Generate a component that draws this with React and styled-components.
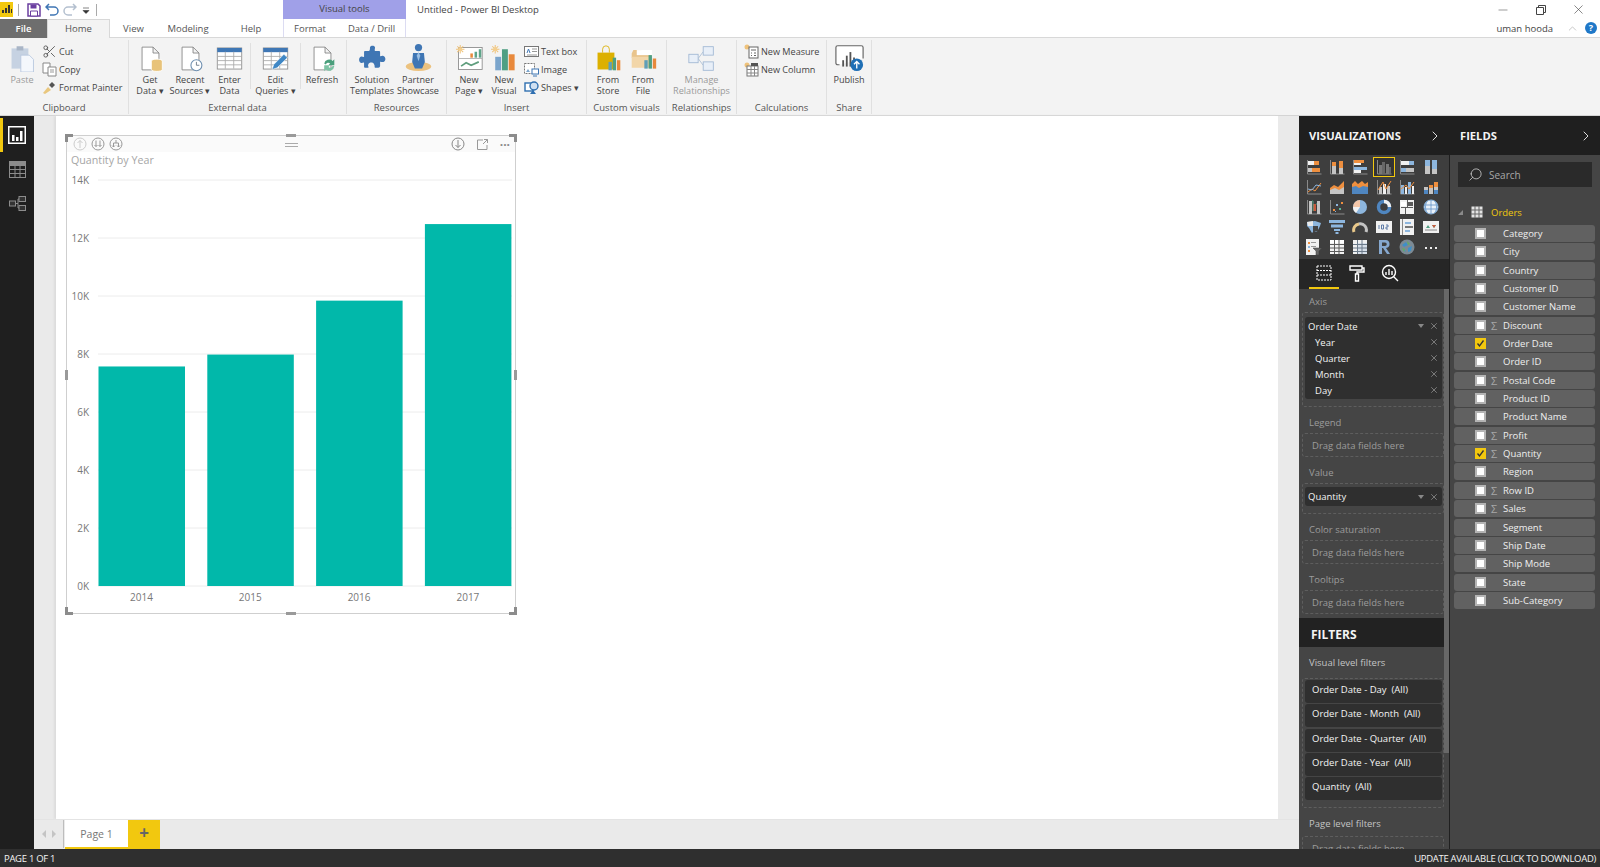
import styled, { createGlobalStyle } from "styled-components";
import { ChevronRight, ChevronUp, Scissors, X, Minus, Search } from "lucide-react";

const GlobalStyle = createGlobalStyle`
  html, body { margin: 0; padding: 0; background: #fff; }
  body { font-family: "Open Sans", "Liberation Sans", sans-serif; font-size: 9.5px; color: #444; }
  * { box-sizing: border-box; }
`;

const Svg32 = ({ children, size = 27 }) => (
  <svg width={size} height={size} viewBox="0 0 32 32">{children}</svg>
);

const Doc = () => (
  <path d="M6 2.5h13l7 7v20H6z M19 2.5v7h7" fill="#fff" stroke="#808080" />
);

const Sun = ({ x = 0, y = 0 }) => (
  <g transform={`translate(${x} ${y})`} stroke="#efc27a" strokeWidth="1.2">
    <path d="M5 0v10M0 5h10M1.5 1.5l7 7M8.5 1.5l-7 7" />
    <circle cx="5" cy="5" r="2.4" fill="#f4cf8e" stroke="none" />
  </g>
);

const large = {
  paste: (
    <Svg32>
      <rect x="3" y="4" width="20" height="24" fill="#c6d2e2" />
      <rect x="9" y="1.5" width="8" height="5" fill="#a9b5c6" />
      <path d="M14 12h10l5 5v15H14z" fill="#f4f7fc" stroke="#b6c6de" />
    </Svg32>
  ),
  getData: (
    <Svg32>
      <Doc />
      <path d="M17 19c0-3 13-3 13 0v10c0 3-13 3-13 0z" fill="#e8c37a" stroke="#fff" />
    </Svg32>
  ),
  recent: (
    <Svg32>
      <Doc />
      <circle cx="23" cy="24" r="6.5" fill="#fff" stroke="#6e8fb0" strokeWidth="1.3" />
      <path d="M23 20v4h3.5" fill="none" stroke="#5f6f80" />
    </Svg32>
  ),
  table: (
    <Svg32>
      <rect x="1.5" y="3.5" width="29" height="25" fill="#fff" stroke="#8a8a8a" />
      <rect x="1.5" y="3.5" width="29" height="5" fill="#3f77b5" />
      <path d="M1.5 13.5h29M1.5 18.5h29M1.5 23.5h29M11 8v20M21 8v20" stroke="#a8a8a8" fill="none" />
    </Svg32>
  ),
  edit: (
    <Svg32>
      <rect x="1.5" y="3.5" width="29" height="25" fill="#fff" stroke="#8a8a8a" />
      <rect x="1.5" y="3.5" width="29" height="5" fill="#3f77b5" />
      <path d="M1.5 13.5h29M1.5 18.5h29M1.5 23.5h29M11 8v20M21 8v20" stroke="#a8a8a8" fill="none" />
      <path d="M12 29l2-6L26 11l4 4-12 12z" fill="#3f87c5" stroke="#fff" strokeWidth=".6" />
    </Svg32>
  ),
  refresh: (
    <Svg32>
      <Doc />
      <path d="M18 22a6 6 0 0 1 10-3l2-2v7h-7l2-2a3 3 0 0 0-5 1z" fill="#4a9f7c" />
      <path d="M30 25a6 6 0 0 1-10 4l-2 2v-7h7l-2 2a3 3 0 0 0 5-1z" fill="#7cc3a4" />
    </Svg32>
  ),
  puzzle: (
    <Svg32>
      <path d="M13 3c0-3 6-3 6 0 0 2-1 3 0 4h5c1 0 1 1 1 2v4c1 1 2-1 4 0 3 1 3 6 0 7-2 1-3-1-4 0v5c0 1-1 2-2 2h-4c-1-1 0-2-1-4-1-3-6-3-7 0-1 2 1 3 0 4H7c-1 0-1-1-1-2v-4c-1-1-2 1-4 0-2.500-1-2.500-6 0-7 2-1 3 1 4 0V9c0-1 0-2 1-2h5c1-1 1-2 1-4z" fill="#3f76b4" />
    </Svg32>
  ),
  partner: (
    <Svg32 size={29}>
      <ellipse cx="16" cy="26" rx="14" ry="5" fill="#ecc27f" />
      <circle cx="16" cy="5" r="4" fill="#3f76b4" />
      <path d="M10 11h12l1 10-3 7h-8l-3-7z" fill="#3f76b4" />
      <path d="M16 10l2 4-2 6-2-6z" fill="#9cc0e4" />
    </Svg32>
  ),
  newPage: (
    <Svg32>
      <rect x="3" y="3" width="28" height="26" fill="#fff" stroke="#888" />
      <path d="M3 16h28" stroke="#aaa" />
      <rect x="17" y="10" width="3" height="5" fill="#e8893c" />
      <rect x="22" y="8" width="3" height="7" fill="#5fa48a" />
      <rect x="27" y="5" width="3" height="10" fill="#5fa48a" />
      <path d="M6 25l6-4 6 3 9-4" fill="none" stroke="#5f9e7d" strokeWidth="2" />
      <Sun x="0" y="0" />
    </Svg32>
  ),
  newVisual: (
    <Svg32>
      <rect x="5" y="14" width="7" height="16" fill="#7ba5cc" />
      <rect x="13" y="5" width="7" height="25" fill="#4f9f83" />
      <rect x="21" y="11" width="7" height="19" fill="#e8893c" />
      <Sun x="0" y="0" />
    </Svg32>
  ),
  store: (
    <Svg32>
      <path d="M3 9h20v20H3z" fill="#dcb000" />
      <path d="M9 9V5a4 4 0 0 1 8 0v4" fill="none" stroke="#dcb000" />
      <rect x="16" y="20" width="4" height="10" fill="#5f9fb8" />
      <rect x="21" y="15" width="4" height="15" fill="#4f9f83" />
      <rect x="26" y="18" width="4" height="12" fill="#e8893c" />
    </Svg32>
  ),
  file: (
    <Svg32>
      <path d="M2 10l2-4h9l2 3h10v6H2z" fill="#e9c48c" />
      <path d="M2 27V14h24v13z" fill="#f2d6a9" />
      <path d="M8 6h18v6H8z" fill="#fff" />
      <rect x="17" y="18" width="4" height="10" fill="#5f9fb8" />
      <rect x="22" y="12" width="4" height="16" fill="#4f9f83" />
      <rect x="27" y="16" width="4" height="12" fill="#e8893c" />
    </Svg32>
  ),
  relationships: (
    <Svg32>
      <path d="M12 16l6-8M12 16l6 8" stroke="#a9bdd4" fill="none" />
      <rect x="1" y="11" width="11" height="10" fill="#e8eff8" stroke="#9fb6d2" />
      <rect x="18" y="2" width="12" height="10" fill="#e8eff8" stroke="#9fb6d2" />
      <rect x="18" y="20" width="12" height="10" fill="#e8eff8" stroke="#9fb6d2" />
    </Svg32>
  ),
  publish: (
    <Svg32 size={29}>
      <path d="M5 24H3a2 2 0 0 1-2-2V5a2 2 0 0 1 2-2h26a2 2 0 0 1 2 2v12" fill="#fff" stroke="#666" strokeWidth="1.300" />
      <rect x="8" y="19" width="2" height="7" fill="#555" />
      <rect x="12" y="14" width="2" height="12" fill="#555" />
      <rect x="16" y="10" width="2" height="16" fill="#555" />
      <rect x="20" y="16" width="2" height="10" fill="#555" />
      <circle cx="24" cy="24" r="7" fill="#1f6fb5" />
      <path d="M24 28v-7M21 23.500l3-3 3 3" fill="none" stroke="#fff" strokeWidth="1.500" />
    </Svg32>
  ),
};

const Svg14 = ({ children }) => (
  <svg width="15" height="15" viewBox="0 0 15 15">{children}</svg>
);

const small = {
  cut: <Scissors size={15} color="#555" strokeWidth={1.4} />,
  copy: (
    <Svg14>
      <path d="M1 1h7v10H1z" fill="#fff" stroke="#888" />
      <path d="M6 5h8v9H6z" fill="#fff" stroke="#888" />
      <path d="M8 8h4M8 10h4" stroke="#999" />
    </Svg14>
  ),
  painter: (
    <Svg14>
      <path d="M1 13l5-6 3 3-6 4z" fill="#e9c77e" />
      <path d="M7 5l3-3 3 3-3 3z" fill="#555" />
    </Svg14>
  ),
  textbox: (
    <Svg14>
      <rect x=".5" y="2.500" width="14" height="10" fill="#fff" stroke="#777" />
      <path d="M3 9l1.500-4L6 9" fill="none" stroke="#3f76b4" />
      <path d="M8 5h5M8 7.500h5M3 11h10" stroke="#999" />
    </Svg14>
  ),
  image: (
    <Svg14>
      <rect x=".5" y="1.500" width="10" height="10" fill="#fff" stroke="#777" strokeDasharray="2 1" />
      <path d="M2 10l2-3 2 3z" fill="#7ba5cc" />
      <rect x="8" y="7" width="6.500" height="5" fill="#fff" stroke="#3f76b4" />
      <path d="M9 14h4" stroke="#3f76b4" />
    </Svg14>
  ),
  shapes: (
    <Svg14>
      <rect x="1" y="3" width="8" height="8" fill="#fff" stroke="#2f6fb0" strokeWidth="1.400" />
      <circle cx="10" cy="6" r="4" fill="#cfe0f2" stroke="#2f6fb0" strokeWidth="1.400" />
      <path d="M6 14l3-4 3 4z" fill="#2f6fb0" />
    </Svg14>
  ),
  measure: (
    <Svg14>
      <circle cx="3" cy="3" r="2.500" fill="#efc27a" />
      <rect x="5" y="3" width="9" height="11" fill="#fff" stroke="#666" />
      <path d="M7 6h5M7 9h1M10 9h2M7 11.500h1M10 11.500h2" stroke="#666" />
    </Svg14>
  ),
  column: (
    <Svg14>
      <circle cx="3" cy="3" r="2.500" fill="#efc27a" />
      <rect x="3" y="4" width="11" height="10" fill="#fff" stroke="#777" />
      <rect x="7" y="1" width="7" height="3" fill="#555" />
      <path d="M3 7.500h11M3 11h11M7 4v10M10.500 4v10" stroke="#888" />
    </Svg14>
  ),
};

const ribbonGroups = [
  {
    label: "Clipboard",
    width: 129,
    items: [
      { kind: "large", icon: "paste", lines: ["Paste"], width: 40, muted: true, inset: 2 },
      {
        kind: "small",
        list: [
          { icon: "cut", text: "Cut" },
          { icon: "copy", text: "Copy" },
          { icon: "painter", text: "Format Painter" },
        ],
      },
    ],
  },
  {
    label: "External data",
    width: 218,
    items: [
      { kind: "large", icon: "getData", lines: ["Get", "Data ▾"], width: 42 },
      { kind: "large", icon: "recent", lines: ["Recent", "Sources ▾"], width: 38 },
      { kind: "large", icon: "table", lines: ["Enter", "Data"], width: 41 },
      { kind: "rule" },
      { kind: "large", icon: "edit", lines: ["Edit", "Queries ▾"], width: 49 },
      { kind: "rule" },
      { kind: "large", icon: "refresh", lines: ["Refresh"], width: 42 },
    ],
  },
  {
    label: "Resources",
    width: 100,
    items: [
      { kind: "large", icon: "puzzle", lines: ["Solution", "Templates"], width: 46, inset: 2 },
      { kind: "large", icon: "partner", lines: ["Partner", "Showcase"], width: 46 },
    ],
  },
  {
    label: "Insert",
    width: 140,
    items: [
      { kind: "large", icon: "newPage", lines: ["New", "Page ▾"], width: 40, inset: 2 },
      { kind: "large", icon: "newVisual", lines: ["New", "Visual"], width: 30 },
      {
        kind: "small",
        inset: 5,
        list: [
          { icon: "textbox", text: "Text box" },
          { icon: "image", text: "Image" },
          { icon: "shapes", text: "Shapes ▾" },
        ],
      },
    ],
  },
  {
    label: "Custom visuals",
    width: 80,
    items: [
      { kind: "large", icon: "store", lines: ["From", "Store"], width: 36, inset: 3 },
      { kind: "large", icon: "file", lines: ["From", "File"], width: 34 },
    ],
  },
  {
    label: "Relationships",
    width: 70,
    items: [{ kind: "large", icon: "relationships", lines: ["Manage", "Relationships"], width: 69, muted: true }],
  },
  {
    label: "Calculations",
    width: 90,
    items: [
      {
        kind: "small",
        inset: 7,
        list: [
          { icon: "measure", text: "New Measure" },
          { icon: "column", text: "New Column" },
        ],
      },
    ],
  },
  {
    label: "Share",
    width: 45,
    items: [{ kind: "large", icon: "publish", lines: ["Publish"], width: 44 }],
  },
];

// tiny rects for the visualization gallery: [x, y, w, h, colour]
const O = "#ee8f3f";
const G = "#c4c4c4";
const B = "#8db6de";
const W = "#f1f1f1";
const D = "#5b5b5b";

const Axis = () => <path d="M1.500 1v14h14" fill="none" stroke="#8a8a8a" />;

const Bars = ({ items, axis = true }) => (
  <>
    {axis && <Axis />}
    {items.map(([x, y, w, h, c], i) => (
      <rect key={i} x={x} y={y} width={w} height={h} fill={c} />
    ))}
  </>
);

const vizIcons = [
  <Bars items={[[2, 2, 6, 4, W], [8, 2, 5, 4, O], [2, 9, 4, 4, G], [6, 9, 8, 4, O]]} />,
  <Bars items={[[3, 7, 4, 8, G], [3, 3, 4, 4, O], [10, 9, 4, 6, G], [10, 2, 4, 7, O]]} />,
  <Bars items={[[2, 1, 10, 3, O], [2, 4, 7, 2, W], [2, 8, 13, 3, B], [2, 11, 7, 3, W]]} />,
  <Bars items={[[3, 6, 3, 9, "#777"], [6, 3, 3, 12, "#666"], [10, 5, 3, 10, "#777"], [13, 8, 2, 7, "#666"]]} />,
  <Bars items={[[2, 2, 8, 4, W], [10, 2, 5, 4, B], [2, 9, 5, 4, B], [7, 9, 8, 4, G]]} />,
  <Bars axis={false} items={[[2, 1, 5, 6, B], [2, 7, 5, 8, G], [9, 1, 5, 9, B], [9, 10, 5, 5, G]]} />,

  <>
    <Axis />
    <path d="M2 13l4-3 3 2 6-8" fill="none" stroke={O} />
    <path d="M2 10l4 1 4-5 5 1" fill="none" stroke={B} />
  </>,
  <>
    <path d="M1 15V9l4-3 4 2 6-6v13z" fill={O} />
    <path d="M1 15v-4l5-2 4 2 5-3v7z" fill={G} />
  </>,
  <>
    <path d="M0 9V5l3-3 3 3 4-3 3 3 3-2v6z" fill={O} />
    <path d="M0 15V8l4-1 3 2 4-2 5 1v7z" fill="#4f86c0" />
  </>,
  <>
    <Bars items={[[3, 8, 3, 7, G], [7, 5, 3, 10, W], [11, 7, 3, 8, G]]} />
    <path d="M2 11l5-8 3 7 5-8" fill="none" stroke={O} />
  </>,
  <>
    <Bars items={[[2, 6, 3, 9, B], [6, 8, 2, 7, W], [9, 3, 3, 12, B], [13, 7, 2, 8, W]]} />
    <path d="M2 10l5-4 3 4 5-7" fill="none" stroke={O} />
  </>,
  <Bars axis={false} items={[[1, 8, 4, 3, G], [1, 11, 4, 4, "#4f86c0"], [6, 6, 4, 3, O], [6, 9, 4, 6, G], [11, 3, 4, 5, O], [11, 8, 4, 3, G], [11, 11, 4, 4, "#4f86c0"]]} />,

  <>
    <Bars items={[[3, 2, 3, 13, G], [7, 5, 3, 7, "#c85a3c"], [11, 2, 3, 13, G]]} />
    <path d="M6 2h1v10M10 5h1" stroke="#4f9f83" fill="none" />
  </>,
  <Bars items={[[4, 10, 2, 2, O], [7, 5, 2, 2, B], [10, 9, 2, 2, "#5fb89a"], [12, 3, 2, 2, O], [6, 12, 1, 1, B]]} />,
  <>
    <circle cx="8" cy="8" r="7" fill={B} />
    <path d="M8 8V1a7 7 0 0 0-7 7z" fill="#f3c6a8" />
    <path d="M8 8H1a7 7 0 0 0 3 6z" fill={W} />
  </>,
  <>
    <circle cx="8" cy="8" r="5.500" fill="none" stroke="#4f86c0" strokeWidth="3.500" />
    <path d="M8 2.500a5.500 5.500 0 0 1 5.500 5.500" fill="none" stroke={W} strokeWidth="3.500" />
  </>,
  <Bars axis={false} items={[[1, 1, 14, 14, W], [9, 3, 5, 4, D], [2, 8, 12, 1, D], [8, 1, 1, 7, D], [6, 9, 1, 6, D], [2, 3, 5, 4, "#fff"]]} />,
  <>
    <circle cx="8" cy="8" r="7" fill="#e9f1f9" stroke="#8db6de" />
    <path d="M1 6h14M1 10h14M8 1v14M4 2c-2 4-2 8 0 12M12 2c2 4 2 8 0 12" fill="none" stroke="#5f93c8" strokeWidth=".8" />
  </>,

  <>
    <path d="M1 3l8-1 6 2-1 3-3 6-3-1-2 2-3-5-2-2z" fill={B} />
    <path d="M1 3l6-1v5H2z" fill="#e9e9e9" />
    <path d="M7 7h5v6l-3-1-2 2z" fill="#444" />
  </>,
  <path d="M0 1h16v3H0zM2 5.500h12v3H2zM5 10h6v2H5zM6.500 13h3v2h-3z" fill={B} />,
  <>
    <path d="M2 13a6 6 0 0 1 5-8" fill="none" stroke="#e9c88a" strokeWidth="3" />
    <path d="M7 5a6 6 0 0 1 7 8" fill="none" stroke={G} strokeWidth="3" />
  </>,
  <>
    <Bars axis={false} items={[[0, 2, 16, 12, W]]} />
    <path d="M3 6v4M5.500 6v4h2V6h-2M10 6h2v2h-2v2h2" fill="none" stroke="#4f6f9f" strokeWidth=".9" />
  </>,
  <Bars axis={false} items={[[1, 0, 14, 16, W], [3, 0, 1, 16, "#888"], [6, 3, 6, 2, B], [6, 7, 8, 2, "#777"], [6, 11, 5, 2, B]]} />,
  <>
    <Bars axis={false} items={[[0, 2, 16, 12, W]]} />
    <path d="M3 9l2-3 2 3zM9 6l2 3 2-3z" fill="#4f9f83" />
    <path d="M9 6l2 3 2-3z" fill="#c85a3c" />
    <path d="M2 11h12" stroke="#888" />
  </>,

  <>
    <Bars axis={false} items={[[0, 0, 13, 16, W], [2, 3, 2, 2, O], [2, 7, 2, 2, B], [2, 11, 2, 2, O], [5, 3, 5, 1, "#999"], [5, 7, 5, 1, "#999"]]} />
    <path d="M7 9h9l-3 3v4h-3v-4z" fill="#666" stroke="#3f3f3f" strokeWidth=".5" />
  </>,
  <>
    <Bars axis={false} items={[[1, 1, 14, 14, W], [1, 1, 14, 3, "#fff"]]} />
    <path d="M1 5.500h14M1 9h14M1 12.500h14M5.500 1v14M10 1v14" stroke="#5c5c5c" />
  </>,
  <>
    <Bars axis={false} items={[[1, 1, 14, 14, "#d7dfe9"], [1, 1, 14, 3, W], [1, 1, 4, 14, W]]} />
    <path d="M1 5.500h14M1 9h14M1 12.500h14M5.500 1v14M10 1v14" stroke="#6c7b8a" />
  </>,
  <path d="M3 15V1h6a4 4 0 0 1 1 8l4 6h-3l-4-6H6v6zM6 3.500V7h3a1.700 1.700 0 0 0 0-3.500z" fill="#86a8cf" />,
  <>
    <circle cx="8" cy="8" r="7.500" fill="#7c8a94" />
    <path d="M3 6l4-3 2 3-4 2zM9 9l4-2-1 5-3 1zM4 11l2 0 1 2z" fill="#3f8fc7" />
    <path d="M8 2l3 3-2 1zM3 9l3 1-1 3z" fill="#5fb05f" />
  </>,
  <path d="M2 8h2v2H2zM7 8h2v2H7zM12 8h2v2h-2z" fill="#eee" />,
];

const fields = [
  { name: "Category" },
  { name: "City" },
  { name: "Country" },
  { name: "Customer ID" },
  { name: "Customer Name" },
  { name: "Discount", sum: true },
  { name: "Order Date", checked: true },
  { name: "Order ID" },
  { name: "Postal Code", sum: true },
  { name: "Product ID" },
  { name: "Product Name" },
  { name: "Profit", sum: true },
  { name: "Quantity", sum: true, checked: true },
  { name: "Region" },
  { name: "Row ID", sum: true },
  { name: "Sales", sum: true },
  { name: "Segment" },
  { name: "Ship Date" },
  { name: "Ship Mode" },
  { name: "State" },
  { name: "Sub-Category" },
];

const chartData = [
  { year: "2014", value: 7570 },
  { year: "2015", value: 7980 },
  { year: "2016", value: 9840 },
  { year: "2017", value: 12480 },
];

const App = () => {
  return (
    <Shell>
      <GlobalStyle />
      <TitleBar>
        <QuickAccess>
          <AppLogo>
            <svg width="13" height="13" viewBox="0 0 13 13">
              <path d="M2 10h2V7H2zM5 10h2V5H5zM8 10h2V2H8zM11 10h1V6h-1z" fill="#333" />
            </svg>
          </AppLogo>
          <BarRule />
          <svg width="14" height="14" viewBox="0 0 14 14">
            <path d="M1 1h10l2 2v10H1z" fill="#fff" stroke="#6b3fa0" strokeWidth="1.500" />
            <path d="M3.500 1.500h6v4h-6z" fill="#6b3fa0" />
            <path d="M3.500 8h7v5h-7z" fill="#fff" stroke="#6b3fa0" />
          </svg>
          <svg width="14" height="14" viewBox="0 0 14 14">
            <path d="M4 1L1 4l3 3M1.500 4H9a4 4 0 0 1 0 8H5" fill="none" stroke="#3f76b4" strokeWidth="1.500" />
          </svg>
          <svg width="14" height="14" viewBox="0 0 14 14">
            <path d="M10 1l3 3-3 3M12.500 4H5a4 4 0 0 0 0 8h4" fill="none" stroke="#b4c0cf" strokeWidth="1.500" />
          </svg>
          <svg width="10" height="10" viewBox="0 0 10 10">
            <path d="M2 3h6M2 5.500h6l-3 3z" fill="#333" stroke="#333" strokeWidth=".6" />
          </svg>
          <BarRule />
        </QuickAccess>
        <VisualTools>Visual tools</VisualTools>
        <WindowTitle>Untitled - Power BI Desktop</WindowTitle>
        <WindowControls>
          <Minus size={14} color="#555" strokeWidth={1} />
          <svg width="12" height="12" viewBox="0 0 12 12">
            <path d="M1.500 3.500h7v7h-7zM3.500 3V1.500h7v7H9" fill="none" stroke="#444" />
          </svg>
          <X size={15} color="#444" strokeWidth={1} />
        </WindowControls>
      </TitleBar>

      <TabBar>
        <FileTab>File</FileTab>
        <Tab $active $width={63}>Home</Tab>
        <Tab $width={47}>View</Tab>
        <Tab $width={62}>Modeling</Tab>
        <Tab $width={64}>Help</Tab>
        <ContextTabs>
          <Tab $width={52}>Format</Tab>
          <Tab $width={71}>Data / Drill</Tab>
        </ContextTabs>
        <Account>
          <span>uman hooda</span>
          <ChevronUp size={13} color="#aaa" strokeWidth={1.2} />
          <HelpDot>?</HelpDot>
        </Account>
      </TabBar>

      <Ribbon>
        {ribbonGroups.map((group) => (
          <RibbonGroup key={group.label} $width={group.width}>
            <GroupItems>
              {group.items.map((item, i) => {
                if (item.kind === "rule") return <GroupRule key={i} />;
                if (item.kind === "small") {
                  return (
                    <SmallStack key={i} $inset={item.inset}>
                      {item.list.map((btn) => (
                        <SmallButton key={btn.text}>
                          <SmallIcon>{small[btn.icon]}</SmallIcon>
                          {btn.text}
                        </SmallButton>
                      ))}
                    </SmallStack>
                  );
                }
                return (
                  <LargeButton key={i} $width={item.width} $muted={item.muted} $inset={item.inset}>
                    <LargeIcon>{large[item.icon]}</LargeIcon>
                    {item.lines.map((line) => (
                      <span key={line}>{line}</span>
                    ))}
                  </LargeButton>
                );
              })}
            </GroupItems>
            <GroupLabel>{group.label}</GroupLabel>
          </RibbonGroup>
        ))}
      </Ribbon>

      <Workspace>
        <LeftNav>
          <NavItem $active>
            <svg width="18" height="18" viewBox="0 0 18 18">
              <rect x=".75" y=".75" width="16.500" height="16.500" fill="none" stroke="#fff" strokeWidth="1.500" />
              <path d="M4 15V9h2.500v6zM8 15V11h2.500v4zM12 15V5h2.500v10z" fill="#fff" />
            </svg>
          </NavItem>
          <NavItem>
            <svg width="17" height="17" viewBox="0 0 17 17">
              <rect x=".5" y=".5" width="16" height="16" fill="none" stroke="#8c8c8c" />
              <rect x="1" y="1" width="15" height="4" fill="#8c8c8c" />
              <path d="M1 8.500h15M1 12.500h15M6 5v11M11 5v11" stroke="#8c8c8c" />
            </svg>
          </NavItem>
          <NavItem>
            <svg width="17" height="17" viewBox="0 0 17 17">
              <path d="M6 8.500h3V4h1M9 8.500V13h1" stroke="#8c8c8c" fill="none" />
              <rect x=".5" y="6" width="6" height="5" fill="#333" stroke="#8c8c8c" />
              <rect x="10" y="1.500" width="6.500" height="5" fill="#333" stroke="#8c8c8c" />
              <rect x="10" y="10.500" width="6.500" height="5" fill="#333" stroke="#8c8c8c" />
            </svg>
          </NavItem>
        </LeftNav>

        <Center>
          <CanvasArea>
            <Page>
              <Visual>
                <Corner $v="top" $h="left" />
                <Corner $v="top" $h="right" />
                <Corner $v="bottom" $h="left" />
                <Corner $v="bottom" $h="right" />
                <SideGrip $side="top" />
                <SideGrip $side="bottom" />
                <SideGrip $side="left" />
                <SideGrip $side="right" />
                <VisualHeader>
                  <HeaderIcons>
                    <svg width="14" height="14" viewBox="0 0 14 14">
                      <circle cx="7" cy="7" r="6" fill="none" stroke="#ccc" />
                      <path d="M7 11V3.500M4.500 6L7 3.500 9.500 6" fill="none" stroke="#ccc" />
                    </svg>
                    <svg width="14" height="14" viewBox="0 0 14 14">
                      <circle cx="7" cy="7" r="6" fill="none" stroke="#999" />
                      <path d="M5 3.500v6M3.500 8L5 9.500 6.500 8M9 3.500v6M7.500 8L9 9.500 10.500 8" fill="none" stroke="#999" />
                    </svg>
                    <svg width="14" height="14" viewBox="0 0 14 14">
                      <circle cx="7" cy="7" r="6" fill="none" stroke="#999" />
                      <path d="M7 3v3M4.500 10V6h5v4M3 8.500L4.500 10 6 8.500M8 8.500L9.500 10 11 8.500" fill="none" stroke="#999" />
                    </svg>
                  </HeaderIcons>
                  <DragGrip />
                  <HeaderActions>
                    <svg width="14" height="14" viewBox="0 0 14 14">
                      <circle cx="7" cy="7" r="6" fill="none" stroke="#888" />
                      <path d="M7 3v7.500M4.500 8L7 10.500 9.500 8" fill="none" stroke="#888" />
                    </svg>
                    <svg width="13" height="13" viewBox="0 0 13 13">
                      <path d="M7 2H1.500v9.500H11V7M8 1.500h3.500V5M11.500 1.500L7 6" fill="none" stroke="#999" />
                    </svg>
                    <MoreDots>···</MoreDots>
                  </HeaderActions>
                </VisualHeader>
                <VisualTitle>Quantity by Year</VisualTitle>
                <ChartSvg width="448" height="442" viewBox="0 0 448 442">
                  {[0, 2, 4, 6, 8, 10, 12, 14].map((k) => (
                    <g key={k}>
                      <line x1="31" x2="445" y1={415 - k * 29} y2={415 - k * 29} stroke="#ececec" />
                      <text x="22" y={419 - k * 29} textAnchor="end">{k}K</text>
                    </g>
                  ))}
                  {chartData.map((d, i) => {
                    const h = d.value * 0.029;
                    const x = 31.5 + i * 108.8;
                    return (
                      <g key={d.year}>
                        <rect x={x} y={415 - h} width="86.500" height={h} fill="#01b8aa" />
                        <text x={x + 43} y="430" textAnchor="middle">{d.year}</text>
                      </g>
                    );
                  })}
                </ChartSvg>
              </Visual>
            </Page>
          </CanvasArea>
          <PageTabs>
            <PageArrows>
              <svg width="22" height="10" viewBox="0 0 22 10">
                <path d="M4 5l4-4v8zM18 5l-4-4v8z" fill="#c4c4c4" />
              </svg>
            </PageArrows>
            <PageTab>Page 1</PageTab>
            <AddPage>+</AddPage>
          </PageTabs>
        </Center>

        <VizPanel>
          <PanelHeader>
            <PanelTitle>VISUALIZATIONS</PanelTitle>
            <ChevronRight size={16} color="#ddd" strokeWidth={1.5} />
          </PanelHeader>
          <VizGallery>
            {vizIcons.map((icon, i) => (
              <VizCell key={i} $selected={i === 3}>
                <svg width="16" height="16" viewBox="0 0 16 16">{icon}</svg>
              </VizCell>
            ))}
          </VizGallery>
          <PaneTabs>
            <PaneTab $active>
              <svg width="18" height="18" viewBox="0 0 18 18">
                <path d="M2 2h14v14H2zM2 6.500h14M2 11h14" fill="none" stroke="#fff" strokeDasharray="2 1" />
              </svg>
            </PaneTab>
            <PaneTab>
              <svg width="18" height="18" viewBox="0 0 18 18">
                <path d="M2 2h12v4H2zM14 4h2v4H9v2M7.500 10h3v7h-3z" fill="none" stroke="#fff" strokeWidth="1.400" />
              </svg>
            </PaneTab>
            <PaneTab>
              <svg width="18" height="18" viewBox="0 0 18 18">
                <circle cx="8" cy="8" r="6.500" fill="none" stroke="#fff" strokeWidth="1.400" />
                <path d="M5 11V8M8 11V5M11 11V7M12.500 12.500L17 17" fill="none" stroke="#fff" strokeWidth="1.400" />
              </svg>
            </PaneTab>
          </PaneTabs>
          <VizScrollArea>
            <VizContent>
              <WellSection>
                <WellLabel>Axis</WellLabel>
                <Well $pad="4px 1px 7px 2px">
                  <FieldCard>
                    <CardRow>
                      Order Date
                      <CardActions>
                        <DropCaret />
                        <X size={10} color="#888" />
                      </CardActions>
                    </CardRow>
                    {["Year", "Quarter", "Month", "Day"].map((level) => (
                      <CardRow key={level} $nested>
                        {level}
                        <CardActions>
                          <X size={10} color="#888" />
                        </CardActions>
                      </CardRow>
                    ))}
                  </FieldCard>
                </Well>
              </WellSection>
              <WellSection>
                <WellLabel>Legend</WellLabel>
                <Well><EmptyHint>Drag data fields here</EmptyHint></Well>
              </WellSection>
              <WellSection>
                <WellLabel>Value</WellLabel>
                <Well $pad="3px 1px 7px 2px">
                  <FieldCard>
                    <CardRow $tall>
                      Quantity
                      <CardActions>
                        <DropCaret />
                        <X size={10} color="#888" />
                      </CardActions>
                    </CardRow>
                  </FieldCard>
                </Well>
              </WellSection>
              <WellSection>
                <WellLabel>Color saturation</WellLabel>
                <Well><EmptyHint>Drag data fields here</EmptyHint></Well>
              </WellSection>
              <WellSection>
                <WellLabel>Tooltips</WellLabel>
                <Well><EmptyHint>Drag data fields here</EmptyHint></Well>
              </WellSection>
              <FiltersHeader>FILTERS</FiltersHeader>
              <FilterLabel>Visual level filters</FilterLabel>
              <FilterWell>
                {[
                  "Order Date - Day  (All)",
                  "Order Date - Month  (All)",
                  "Order Date - Quarter  (All)",
                  "Order Date - Year  (All)",
                  "Quantity  (All)",
                ].map((f) => (
                  <FilterCard key={f}>{f}</FilterCard>
                ))}
              </FilterWell>
              <FilterLabel>Page level filters</FilterLabel>
              <PageFilterWell><EmptyHint>Drag data fields here</EmptyHint></PageFilterWell>
            </VizContent>
            <ScrollTrack>
              <ScrollThumb />
            </ScrollTrack>
          </VizScrollArea>
        </VizPanel>

        <FieldsPanel>
          <PanelHeader>
            <PanelTitle>FIELDS</PanelTitle>
            <ChevronRight size={16} color="#ddd" strokeWidth={1.5} />
          </PanelHeader>
          <SearchBox>
            <FlippedSearch size={15} color="#ccc" strokeWidth={1.3} />
            Search
          </SearchBox>
          <TableRow>
            <TreeCaret />
            <svg width="12" height="12" viewBox="0 0 12 12">
              <rect x=".5" y=".5" width="11" height="11" fill="#e4e4e4" />
              <path d="M0 4h12M0 8h12M4 0v12M8 0v12" stroke="#666" />
            </svg>
            <TableName>Orders</TableName>
          </TableRow>
          <FieldList>
            {fields.map((f) => (
              <FieldRow key={f.name}>
                <Check $checked={f.checked}>
                  {f.checked && (
                    <svg width="9" height="9" viewBox="0 0 9 9">
                      <path d="M1.500 4.500l2 2.500 4-5.500" fill="none" stroke="#333" strokeWidth="1.300" />
                    </svg>
                  )}
                </Check>
                <Sigma>{f.sum ? "Σ" : ""}</Sigma>
                {f.name}
              </FieldRow>
            ))}
          </FieldList>
        </FieldsPanel>
      </Workspace>

      <StatusBar>
        <span>PAGE 1 OF 1</span>
        <span>UPDATE AVAILABLE (CLICK TO DOWNLOAD)</span>
      </StatusBar>
    </Shell>
  );
};

const Shell = styled.div`
  width: 1600px;
  height: 867px;
  display: flex;
  flex-direction: column;
  overflow: hidden;
`;

const TitleBar = styled.div`
  height: 19px;
  display: flex;
  align-items: center;
  background: #fff;
`;

const QuickAccess = styled.div`
  width: 283px;
  display: flex;
  align-items: center;
  gap: 4px;
`;

const AppLogo = styled.div`
  width: 13px;
  height: 15px;
  background: #f2c80f;
  display: flex;
  align-items: center;
`;

const BarRule = styled.div`
  width: 1px;
  height: 12px;
  background: #aaa;
  margin: 0 4px 0 1px;
`;

const VisualTools = styled.div`
  width: 123px;
  height: 19px;
  background: #a0a0e8;
  color: #444;
  text-align: center;
  line-height: 17px;
`;

const WindowTitle = styled.div`
  margin-left: 11px;
  color: #444;
`;

const WindowControls = styled.div`
  margin-left: auto;
  width: 104px;
  display: flex;
  align-items: center;
  justify-content: space-between;
  padding: 0 14px 0 0;
`;

const TabBar = styled.div`
  height: 19px;
  display: flex;
  background: #fff;
  border-bottom: 1px solid #d8d8d8;
`;

const FileTab = styled.div`
  width: 47px;
  height: 19px;
  background: #6e6e6e;
  color: #fff;
  font-weight: 600;
  text-align: center;
  line-height: 20px;
`;

const Tab = styled.div`
  width: ${(p) => p.$width}px;
  flex-shrink: 0;
  height: ${(p) => (p.$active ? "19px" : "18px")};
  text-align: center;
  color: #555;
  background: ${(p) => (p.$active ? "#f3f3f3" : "transparent")};
  border: ${(p) => (p.$active ? "1px solid #d8d8d8" : "none")};
  border-bottom: none;
  line-height: ${(p) => (p.$active ? "18px" : "20px")};
`;

const ContextTabs = styled.div`
  display: flex;
  border-left: 1px solid #dcdcf2;
  border-right: 1px solid #dcdcf2;
  width: 123px;
`;

const Account = styled.div`
  margin-left: auto;
  display: flex;
  align-items: center;
  height: 18px;
  padding-right: 3px;
  color: #444;
  span {
    margin-right: 13px;
  }
  svg {
    margin-right: 6px;
  }
`;

const HelpDot = styled.div`
  width: 12px;
  height: 12px;
  border-radius: 50%;
  background: #1f78c8;
  color: #fff;
  font-size: 9px;
  font-weight: 700;
  text-align: center;
  line-height: 12px;
`;

const Ribbon = styled.div`
  height: 78px;
  display: flex;
  background: #f3f3f3;
  border-bottom: 1px solid #d4d4d4;
  font-size: 9.1px;
`;

const RibbonGroup = styled.div`
  width: ${(p) => p.$width}px;
  height: 74px;
  margin-top: 2px;
  display: flex;
  flex-direction: column;
  border-right: 1px solid #e0e0e0;
`;

const GroupItems = styled.div`
  flex: 1;
  display: flex;
  min-height: 0;
`;

const GroupLabel = styled.div`
  height: 15px;
  text-align: center;
  line-height: 17px;
  font-size: 9.5px;
  color: #555;
`;

const GroupRule = styled.div`
  width: 1px;
  height: 46px;
  margin-top: 3px;
  background: #e0e0e0;
  flex-shrink: 0;
`;

const LargeButton = styled.div`
  width: ${(p) => p.$width}px;
  margin-left: ${(p) => p.$inset || 0}px;
  display: flex;
  flex-direction: column;
  align-items: center;
  color: ${(p) => (p.$muted ? "#9a9a9a" : "#444")};
  line-height: 11px;
  white-space: nowrap;
  flex-shrink: 0;
`;

const LargeIcon = styled.div`
  height: 34px;
  display: flex;
  align-items: flex-end;
  padding-bottom: 2px;
`;

const SmallStack = styled.div`
  margin-left: ${(p) => p.$inset || 0}px;
  padding-top: 4px;
  display: flex;
  flex-direction: column;
  gap: 3px;
`;

const SmallButton = styled.div`
  height: 15px;
  display: flex;
  align-items: center;
  gap: 2px;
  white-space: nowrap;
  color: #444;
`;

const SmallIcon = styled.span`
  display: inline-flex;
  width: 15px;
  height: 15px;
`;

const Workspace = styled.div`
  flex: 1;
  display: flex;
  min-height: 0;
`;

const LeftNav = styled.div`
  width: 34px;
  background: #1f1f1f;
  flex-shrink: 0;
`;

const NavItem = styled.div`
  height: 34px;
  display: flex;
  align-items: center;
  justify-content: center;
  margin-top: ${(p) => (p.$active ? "2px" : "0")};
  border-left: 3px solid ${(p) => (p.$active ? "#f2c80f" : "transparent")};
  border-right: 3px solid transparent;
`;

const Center = styled.div`
  flex: 1;
  display: flex;
  flex-direction: column;
  min-width: 0;
`;

const CanvasArea = styled.div`
  flex: 1;
  display: flex;
  background: #eaeaea;
  padding: 0 21px 0 22px;
  min-height: 0;
`;

const Page = styled.div`
  flex: 1;
  background: #fff;
  box-shadow: -2px 0 2px #dcdcdc;
  padding: 19px 0 0 10px;
`;

const Visual = styled.div`
  position: relative;
  width: 450px;
  height: 479px;
  border: 1px solid #cfcfcf;
`;

const Corner = styled.div`
  position: absolute;
  width: 8px;
  height: 8px;
  ${(p) => p.$v}: -2px;
  ${(p) => p.$h}: -2px;
  border-${(p) => p.$v}: 3px solid #8c8c8c;
  border-${(p) => p.$h}: 3px solid #8c8c8c;
`;

const SideGrip = styled.div`
  position: absolute;
  background: #9a9a9a;
  ${(p) =>
    p.$side === "top" || p.$side === "bottom"
      ? `width: 10px; height: 3px; left: 219px; ${p.$side}: -2px;`
      : `width: 3px; height: 10px; top: 234px; ${p.$side}: -2px;`}
`;

const VisualHeader = styled.div`
  height: 16px;
  background: #fafafa;
  display: flex;
  align-items: center;
  justify-content: space-between;
  padding: 0 5px 0 6px;
`;

const HeaderIcons = styled.div`
  display: flex;
  gap: 4px;
`;

const DragGrip = styled.div`
  width: 13px;
  height: 4px;
  border-top: 1px solid #aaa;
  border-bottom: 1px solid #aaa;
  margin: 2px 0 0 9px;
`;

const HeaderActions = styled.div`
  display: flex;
  align-items: center;
  gap: 11px;
`;

const MoreDots = styled.span`
  font-size: 12px;
  font-weight: 700;
  color: #888;
`;

const VisualTitle = styled.div`
  height: 19px;
  padding-left: 4px;
  font-size: 10.7px;
  line-height: 17px;
  color: #a6a6a6;
`;

const ChartSvg = styled.svg`
  display: block;
  text {
    font-family: "Open Sans", "Liberation Sans", sans-serif;
    font-size: 10px;
    fill: #777;
  }
`;

const PageTabs = styled.div`
  height: 30px;
  background: #eaeaea;
  display: flex;
  align-items: stretch;
  border-top: 1px solid #e4e4e4;
`;

const PageArrows = styled.div`
  width: 30px;
  display: flex;
  align-items: center;
  justify-content: center;
  border-right: 1px solid #bdbdbd;
  margin-bottom: 1px;
`;

const PageTab = styled.div`
  width: 63px;
  margin-left: 1px;
  background: #fff;
  border-bottom: 2px solid #f2c80f;
  color: #777;
  text-align: center;
  font-size: 10.5px;
  line-height: 28px;
`;

const AddPage = styled.div`
  width: 32px;
  background: #f2c80f;
  color: #666;
  font-size: 17px;
  font-weight: 700;
  text-align: center;
  line-height: 26px;
`;

const panelBase = `
  flex-shrink: 0;
  background: #454545;
  display: flex;
  flex-direction: column;
  min-height: 0;
`;

const VizPanel = styled.div`
  ${panelBase}
  width: 150px;
`;

const FieldsPanel = styled.div`
  ${panelBase}
  width: 151px;
  border-left: 1px solid #1f1f1f;
`;

const PanelHeader = styled.div`
  height: 39px;
  flex-shrink: 0;
  background: #1f1f1f;
  display: flex;
  align-items: center;
  justify-content: space-between;
  padding: 0 6px 0 10px;
`;

const PanelTitle = styled.div`
  color: #f4f4f4;
  font-size: 11.2px;
  font-weight: 700;
`;

const VizGallery = styled.div`
  height: 104px;
  flex-shrink: 0;
  background: #3e3e3e;
  display: grid;
  grid-template-columns: repeat(6, 23.4px);
  grid-auto-rows: 20px;
  padding: 2px 0 0 3px;
`;

const VizCell = styled.div`
  display: flex;
  align-items: center;
  justify-content: center;
  margin: 0 1px;
  background: ${(p) => (p.$selected ? "#333" : "transparent")};
  border: ${(p) => (p.$selected ? "1.5px solid #f2c80f" : "none")};
`;

const PaneTabs = styled.div`
  height: 30px;
  flex-shrink: 0;
  background: #262626;
  display: flex;
  padding-left: 10px;
  gap: 3px;
`;

const PaneTab = styled.div`
  width: 30px;
  display: flex;
  align-items: center;
  justify-content: center;
  border-bottom: 2px solid ${(p) => (p.$active ? "#f2c80f" : "transparent")};
`;

const VizScrollArea = styled.div`
  flex: 1;
  display: flex;
  min-height: 0;
  overflow: hidden;
`;

const VizContent = styled.div`
  width: 145px;
  flex-shrink: 0;
  padding-top: 5px;
  background: #454545;
  overflow: hidden;
`;

const ScrollTrack = styled.div`
  width: 5px;
  background: #454545;
`;

const ScrollThumb = styled.div`
  height: 464px;
  background: #686868;
`;

const WellSection = styled.div`
  margin-bottom: 8px;
`;

const WellLabel = styled.div`
  height: 16px;
  padding-left: 10px;
  line-height: 16px;
  color: #9c9c9c;
`;

const Well = styled.div`
  margin: 2px 0 0 3px;
  min-height: 24px;
  border: 1px dashed #5e5e5e;
  border-radius: 3px;
  padding: ${(p) => p.$pad || "0"};
`;

const EmptyHint = styled.div`
  height: 22px;
  line-height: 24px;
  padding-left: 9px;
  color: #9c9c9c;
`;

const FieldCard = styled.div`
  background: #2f2f2f;
  border-radius: 3px;
  padding: 1px 0;
`;

const CardRow = styled.div`
  height: ${(p) => (p.$tall ? "17px" : "16px")};
  display: flex;
  align-items: center;
  padding-left: ${(p) => (p.$nested ? "10px" : "3px")};
  color: #f4f4f4;
`;

const CardActions = styled.div`
  margin-left: auto;
  padding-right: 3px;
  display: flex;
  align-items: center;
  gap: 5px;
`;

const DropCaret = styled.span`
  width: 0;
  height: 0;
  border-left: 3.500px solid transparent;
  border-right: 3.500px solid transparent;
  border-top: 4px solid #888;
`;

const FiltersHeader = styled.div`
  height: 29px;
  margin-top: -4px;
  background: #222;
  color: #f4f4f4;
  font-size: 12px;
  font-weight: 700;
  padding-left: 12px;
  line-height: 33px;
`;

const FilterLabel = styled.div`
  height: 16px;
  margin-top: 8px;
  padding-left: 10px;
  line-height: 16px;
  color: #c4c4c4;
`;

const FilterWell = styled.div`
  margin: 7px 0 0 3px;
  height: 130px;
  border: 1px dashed #5e5e5e;
  border-radius: 3px;
  padding: 1px 1px 0 2px;
  display: flex;
  flex-direction: column;
  gap: 1.300px;
`;

const PageFilterWell = styled.div`
  margin: 4px 0 0 3px;
  height: 24px;
  border: 1px dashed #5e5e5e;
  border-radius: 3px;
`;

const FilterCard = styled.div`
  height: 23px;
  background: #2f2f2f;
  border-radius: 3px;
  color: #f4f4f4;
  padding-left: 7px;
  line-height: 20px;
  white-space: pre;
`;

const SearchBox = styled.div`
  margin: 7px 8px 0 8px;
  height: 25px;
  flex-shrink: 0;
  background: #2a2a2a;
  color: #a8a8a8;
  display: flex;
  align-items: center;
  gap: 6px;
  padding-left: 10px;
  font-size: 10px;
`;

const FlippedSearch = styled(Search)`
  transform: scaleX(-1);
`;

const TableRow = styled.div`
  height: 18px;
  margin-top: 16px;
  flex-shrink: 0;
  display: flex;
  align-items: center;
  padding-left: 8px;
  gap: 8px;
`;

const TreeCaret = styled.span`
  width: 0;
  height: 0;
  border-bottom: 5px solid #8a8a8a;
  border-left: 5px solid transparent;
`;

const TableName = styled.span`
  color: #f2c80f;
`;

const FieldList = styled.div`
  margin-top: 4px;
  padding: 0 5px 0 4px;
  display: flex;
  flex-direction: column;
  gap: 1.350px;
`;

const FieldRow = styled.div`
  height: 17px;
  background: #616161;
  border-radius: 3px;
  display: flex;
  align-items: center;
  padding-left: 21px;
  color: #efefef;
`;

const Check = styled.span`
  width: 11px;
  height: 11px;
  flex-shrink: 0;
  background: ${(p) => (p.$checked ? "#f2c80f" : "#fff")};
  border: ${(p) => (p.$checked ? "0" : "2px solid #b4b4b4")};
  display: flex;
  align-items: center;
  justify-content: center;
`;

const Sigma = styled.span`
  width: 17px;
  flex-shrink: 0;
  color: #a8a8a8;
  padding-left: 5px;
  font-size: 11px;
`;

const StatusBar = styled.div`
  height: 18px;
  flex-shrink: 0;
  background: #2f2f2f;
  color: #f4f4f4;
  display: flex;
  align-items: center;
  justify-content: space-between;
  padding: 0 4px;
  letter-spacing: -0.3px;
`;

export default App;
